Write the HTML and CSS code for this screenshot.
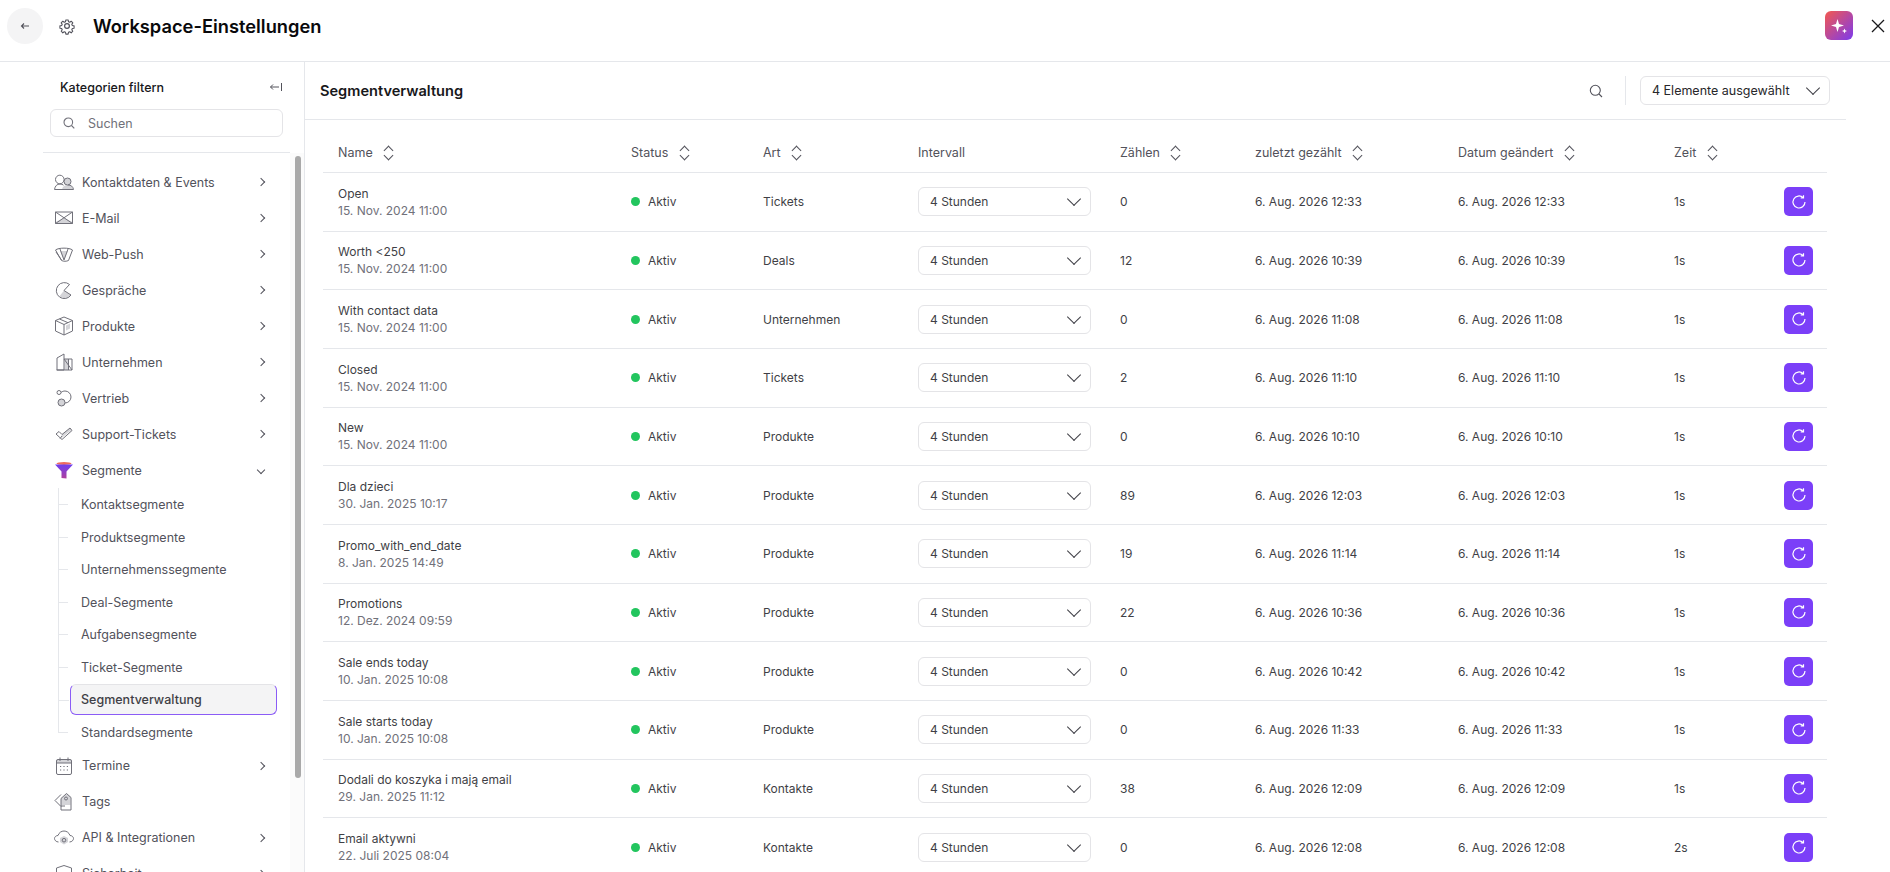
FILE: index.html
```html
<!DOCTYPE html>
<html lang="de">
<head>
  <meta charset="UTF-8">
  <title>Workspace-Einstellungen</title>
  <link rel="stylesheet" href="styles.css">
</head>
<body>
  <div class="app">
    <header class="topbar">
      <button class="back-btn">
        <svg width="10" height="10" viewBox="0 0 10 10"><path d="M9 5H1.500M4 2.500 1.500 5 4 7.500" fill="none" stroke="#52525b" stroke-width="1.100"/></svg>
      </button>
      <span class="gear">
        <svg width="18" height="18" viewBox="0 0 24 24" fill="none" stroke="#52525b" stroke-width="1.600" stroke-linejoin="round"><path d="M10.300 3h3.400l.5 2.600 1.800.8 2.200-1.500 2.400 2.400-1.500 2.200.8 1.800 2.600.5v3.400l-2.600.5-.8 1.800 1.500 2.200-2.400 2.400-2.200-1.500-1.800.8-.5 2.600h-3.400l-.5-2.600-1.800-.8-2.200 1.500-2.400-2.400 1.500-2.200-.8-1.800-2.600-.5v-3.400l2.600-.5.8-1.800-1.500-2.200 2.400-2.400 2.200 1.500 1.800-.8z" transform="translate(1.200 1.200) scale(.9)"/><circle cx="12" cy="12" r="3.200"/></svg>
      </span>
      <h1>Workspace-Einstellungen</h1>
      <div class="topbar-right">
        <span class="ai-btn">
          <svg width="22" height="22" viewBox="0 0 22 22" fill="#fff"><path d="M9.500 4 11 9l5 1.500L11 12l-1.500 5L8 12l-5-1.500L8 9z"/><path d="M16.500 13.500l.7 1.800 1.800.7-1.800.7-.7 1.800-.7-1.800-1.800-.7 1.800-.7z"/></svg>
        </span>
        <svg class="close" width="14" height="14" viewBox="0 0 14 14"><path d="M1 1l12 12M13 1 1 13" stroke="#18181b" stroke-width="1.300"/></svg>
      </div>
    </header>

    <div class="main">
      <aside class="sidebar">
        <div class="filter-head">
          <span>Kategorien filtern</span>
          <svg width="14" height="12" viewBox="0 0 14 12"><path d="M10 6H1.500M4 3.500 1.500 6 4 8.500M12.500 2v8" fill="none" stroke="#52525b" stroke-width="1"/></svg>
        </div>
        <div class="side-search">
          <svg width="14" height="14" viewBox="0 0 14 14" fill="none" stroke="#71717a" stroke-width="1.100"><circle cx="6.300" cy="6.300" r="4.300"/><path d="m9.500 9.500 2.800 2.800"/></svg>
          <span>Suchen</span>
        </div>
        <div class="nav-wrap">
          <nav class="nav">
            <a class="nav-item">
              <svg class="ico" viewBox="0 0 20 20"><circle cx="5.800" cy="7.500" r="4.300"/><path class="f" d="M8 17.500c.5-3 2.500-4.500 5.500-4.500s5 1.500 5.500 4.500z"/><circle class="f" cx="13.500" cy="9.500" r="3.500"/><circle cx="13.500" cy="9.500" r="3.500"/><path d="M.5 17.500C1 14 3 12 6 12c1.500 0 2.700.4 3.500 1.200M.5 17.500H19.500C19 14.500 17 13 14 13"/></svg>
              <span>Kontaktdaten &amp; Events</span><i class="chev"></i>
            </a>
            <a class="nav-item">
              <svg class="ico" viewBox="0 0 20 20"><path class="f" d="M1.500 15.500V14L10 10l8.500 4v1.500z"/><path d="M1.500 4h17v11.500h-17zM1.500 4 18.500 15.500M18.500 4 1.500 15.500"/></svg>
              <span>E-Mail</span><i class="chev"></i>
            </a>
            <a class="nav-item">
              <svg class="ico" viewBox="0 0 20 20"><path class="f" d="M6 7h8l-4 9z"/><path d="M1.500 6c3-2.500 14-2.500 17 0l-4 10.500c-2 1-5 1-7 0zM6 5l4 11 4-11M2 8l5.500 8"/></svg>
              <span>Web-Push</span><i class="chev"></i>
            </a>
            <a class="nav-item">
              <svg class="ico" viewBox="0 0 20 20"><path class="f" d="M10 10.500 17 15c-1.500 2-4 3-6.500 3-2 0-3.500-.6-5-1.800z"/><path d="M15.500 4.500A8 8 0 1 0 17 15l-7-4.500z"/></svg>
              <span>Gespräche</span><i class="chev"></i>
            </a>
            <a class="nav-item">
              <svg class="ico" viewBox="0 0 20 20"><path class="f" d="M12 9.500l4-2v5l-4 2z"/><path d="M10 1 18.500 4.500v10.500L10 19 1.500 15V4.500zM1.500 4.500 10 8.500l8.500-4M10 8.500V19M5.500 3l8.500 3.700"/></svg>
              <span>Produkte</span><i class="chev"></i>
            </a>
            <a class="nav-item">
              <svg class="ico" viewBox="0 0 20 20"><path class="f" d="M10.500 7h4v11h-4z"/><path d="M3 18V6l7-4v16zM10 7h8v11zM2.500 18h15.500M14.500 7v11"/></svg>
              <span>Unternehmen</span><i class="chev"></i>
            </a>
            <a class="nav-item">
              <svg class="ico" viewBox="0 0 20 20"><circle class="f" cx="7.500" cy="14.500" r="3.500"/><circle cx="7.500" cy="14.500" r="3.500"/><circle cx="5" cy="4.500" r="2"/><path d="M7 4.500c1-1 2.500-1.500 4-1.500a6 6 0 0 1 0 12H11"/></svg>
              <span>Vertrieb</span><i class="chev"></i>
            </a>
            <a class="nav-item">
              <svg class="ico" viewBox="0 0 20 20"><path class="f" d="m7.500 14 10-8-1.500-2-8.500 7z"/><path d="m2 10 3-2.500 3 3 8-6.500 2 2.500-10 9zM6 14.500 8 12"/></svg>
              <span>Support-Tickets</span><i class="chev"></i>
            </a>
            <a class="nav-item">
              <svg class="ico" viewBox="0 0 20 20"><defs><linearGradient id="fun" x1="0" y1="0" x2="0" y2="1"><stop offset="0" stop-color="#6d3df0"/><stop offset="1" stop-color="#b0409c"/></linearGradient></defs><ellipse cx="10" cy="3.500" rx="7.500" ry="1.500" fill="#ef6a5e" stroke="none"/><path d="M1 4.500h18L12.500 11.500V18.500l-5-.5v-6.500z" fill="url(#fun)" stroke="none"/></svg>
              <span>Segmente</span><i class="chev chev-down"></i>
            </a>
            <ul class="sub">
              <li>Kontaktsegmente</li>
              <li>Produktsegmente</li>
              <li>Unternehmenssegmente</li>
              <li>Deal-Segmente</li>
              <li>Aufgabensegmente</li>
              <li>Ticket-Segmente</li>
              <li class="active">Segmentverwaltung</li>
              <li>Standardsegmente</li>
            </ul>
            <a class="nav-item">
              <svg class="ico" viewBox="0 0 20 20"><path class="f" d="M2.500 3.500h15V7h-15z"/><rect x="2.500" y="3.500" width="15" height="15" rx="1.500"/><path d="M6 1.500v3.500M14 1.500v3.500M2.500 7h15M6 10.500h1.200M9.400 10.500h1.200M12.800 10.500H14M6 14h1.200M9.400 14h1.200M12.800 14H14"/></svg>
              <span>Termine</span><i class="chev"></i>
            </a>
            <a class="nav-item">
              <svg class="ico" viewBox="0 0 20 20"><path class="f" d="M7 6.500 12.500 1.500l4 3.500V13H7z"/><path d="M7 2.500 1 8.500l6 6M7 6.500 12.500 1.500l4.500 4V18H7zM7 14h4"/><circle cx="12" cy="6.500" r="1.500"/></svg>
              <span>Tags</span>
            </a>
            <a class="nav-item">
              <svg class="ico" viewBox="0 0 20 20"><path d="M4.500 14C2 14 .5 12 .5 10.500S2 7.500 4 7.500C5 4.500 7.500 3 10 3s5 1.500 6 4.500c2 0 3.500 1.500 3.500 3s-1.500 3.500-4 3.500"/><path class="f" d="M10 8 14 10v4l-4 2.500L6 14v-4z"/><circle cx="10" cy="12.200" r="1.800"/></svg>
              <span>API &amp; Integrationen</span><i class="chev"></i>
            </a>
            <a class="nav-item">
              <svg class="ico" viewBox="0 0 20 20"><path d="M10 1.500 17.500 4v7c0 4-3.500 6.500-7.500 7.500-4-1-7.500-3.500-7.500-7.500V4z"/></svg>
              <span>Sicherheit</span><i class="chev"></i>
            </a>
          </nav>
          <div class="scroll-track"><div class="scroll-thumb"></div></div>
        </div>
      </aside>

      <section class="content">
        <div class="toolbar">
          <h2>Segmentverwaltung</h2>
          <svg class="tool-search" width="16" height="16" viewBox="0 0 16 16" fill="none" stroke="#52525b" stroke-width="1.100"><circle cx="7.300" cy="7.300" r="5"/><path d="m11 11 3 3"/></svg>
          <div class="tool-sep"></div>
          <div class="select wide">4 Elemente ausgewählt<i class="sel-chev"></i></div>
        </div>

        <table class="grid">
          <colgroup>
            <col class="c-name"><col class="c-status"><col class="c-art"><col class="c-int"><col class="c-count"><col class="c-last"><col class="c-date"><col class="c-time"><col class="c-act">
          </colgroup>
          <thead>
            <tr>
              <th>Name<i class="sort"></i></th>
              <th>Status<i class="sort"></i></th>
              <th>Art<i class="sort"></i></th>
              <th>Intervall</th>
              <th>Zählen<i class="sort"></i></th>
              <th>zuletzt gezählt<i class="sort"></i></th>
              <th>Datum geändert<i class="sort"></i></th>
              <th>Zeit<i class="sort"></i></th>
              <th></th>
            </tr>
          </thead>
          <tbody>
            <tr>
              <td><div class="nm">Open</div><div class="dt">15. Nov. 2024 11:00</div></td>
              <td><span class="dot"></span>Aktiv</td><td>Tickets</td>
              <td><div class="select">4 Stunden<i class="sel-chev"></i></div></td>
              <td>0</td><td>6. Aug. 2026 12:33</td><td>6. Aug. 2026 12:33</td><td>1s</td>
              <td><button class="run"><svg viewBox="0 0 16 16"><path d="M14 8a6 6 0 1 1-1.800-4.300M12.500 1.200v2.800H9.700"/></svg></button></td>
            </tr>
            <tr>
              <td><div class="nm">Worth &lt;250</div><div class="dt">15. Nov. 2024 11:00</div></td>
              <td><span class="dot"></span>Aktiv</td><td>Deals</td>
              <td><div class="select">4 Stunden<i class="sel-chev"></i></div></td>
              <td>12</td><td>6. Aug. 2026 10:39</td><td>6. Aug. 2026 10:39</td><td>1s</td>
              <td><button class="run"><svg viewBox="0 0 16 16"><path d="M14 8a6 6 0 1 1-1.800-4.300M12.500 1.200v2.800H9.700"/></svg></button></td>
            </tr>
            <tr>
              <td><div class="nm">With contact data</div><div class="dt">15. Nov. 2024 11:00</div></td>
              <td><span class="dot"></span>Aktiv</td><td>Unternehmen</td>
              <td><div class="select">4 Stunden<i class="sel-chev"></i></div></td>
              <td>0</td><td>6. Aug. 2026 11:08</td><td>6. Aug. 2026 11:08</td><td>1s</td>
              <td><button class="run"><svg viewBox="0 0 16 16"><path d="M14 8a6 6 0 1 1-1.800-4.300M12.500 1.200v2.800H9.700"/></svg></button></td>
            </tr>
            <tr>
              <td><div class="nm">Closed</div><div class="dt">15. Nov. 2024 11:00</div></td>
              <td><span class="dot"></span>Aktiv</td><td>Tickets</td>
              <td><div class="select">4 Stunden<i class="sel-chev"></i></div></td>
              <td>2</td><td>6. Aug. 2026 11:10</td><td>6. Aug. 2026 11:10</td><td>1s</td>
              <td><button class="run"><svg viewBox="0 0 16 16"><path d="M14 8a6 6 0 1 1-1.800-4.300M12.500 1.200v2.800H9.700"/></svg></button></td>
            </tr>
            <tr>
              <td><div class="nm">New</div><div class="dt">15. Nov. 2024 11:00</div></td>
              <td><span class="dot"></span>Aktiv</td><td>Produkte</td>
              <td><div class="select">4 Stunden<i class="sel-chev"></i></div></td>
              <td>0</td><td>6. Aug. 2026 10:10</td><td>6. Aug. 2026 10:10</td><td>1s</td>
              <td><button class="run"><svg viewBox="0 0 16 16"><path d="M14 8a6 6 0 1 1-1.800-4.300M12.500 1.200v2.800H9.700"/></svg></button></td>
            </tr>
            <tr>
              <td><div class="nm">Dla dzieci</div><div class="dt">30. Jan. 2025 10:17</div></td>
              <td><span class="dot"></span>Aktiv</td><td>Produkte</td>
              <td><div class="select">4 Stunden<i class="sel-chev"></i></div></td>
              <td>89</td><td>6. Aug. 2026 12:03</td><td>6. Aug. 2026 12:03</td><td>1s</td>
              <td><button class="run"><svg viewBox="0 0 16 16"><path d="M14 8a6 6 0 1 1-1.800-4.300M12.500 1.200v2.800H9.700"/></svg></button></td>
            </tr>
            <tr>
              <td><div class="nm">Promo_with_end_date</div><div class="dt">8. Jan. 2025 14:49</div></td>
              <td><span class="dot"></span>Aktiv</td><td>Produkte</td>
              <td><div class="select">4 Stunden<i class="sel-chev"></i></div></td>
              <td>19</td><td>6. Aug. 2026 11:14</td><td>6. Aug. 2026 11:14</td><td>1s</td>
              <td><button class="run"><svg viewBox="0 0 16 16"><path d="M14 8a6 6 0 1 1-1.800-4.300M12.500 1.200v2.800H9.700"/></svg></button></td>
            </tr>
            <tr>
              <td><div class="nm">Promotions</div><div class="dt">12. Dez. 2024 09:59</div></td>
              <td><span class="dot"></span>Aktiv</td><td>Produkte</td>
              <td><div class="select">4 Stunden<i class="sel-chev"></i></div></td>
              <td>22</td><td>6. Aug. 2026 10:36</td><td>6. Aug. 2026 10:36</td><td>1s</td>
              <td><button class="run"><svg viewBox="0 0 16 16"><path d="M14 8a6 6 0 1 1-1.800-4.300M12.500 1.200v2.800H9.700"/></svg></button></td>
            </tr>
            <tr>
              <td><div class="nm">Sale ends today</div><div class="dt">10. Jan. 2025 10:08</div></td>
              <td><span class="dot"></span>Aktiv</td><td>Produkte</td>
              <td><div class="select">4 Stunden<i class="sel-chev"></i></div></td>
              <td>0</td><td>6. Aug. 2026 10:42</td><td>6. Aug. 2026 10:42</td><td>1s</td>
              <td><button class="run"><svg viewBox="0 0 16 16"><path d="M14 8a6 6 0 1 1-1.800-4.300M12.500 1.200v2.800H9.700"/></svg></button></td>
            </tr>
            <tr>
              <td><div class="nm">Sale starts today</div><div class="dt">10. Jan. 2025 10:08</div></td>
              <td><span class="dot"></span>Aktiv</td><td>Produkte</td>
              <td><div class="select">4 Stunden<i class="sel-chev"></i></div></td>
              <td>0</td><td>6. Aug. 2026 11:33</td><td>6. Aug. 2026 11:33</td><td>1s</td>
              <td><button class="run"><svg viewBox="0 0 16 16"><path d="M14 8a6 6 0 1 1-1.800-4.300M12.500 1.200v2.800H9.700"/></svg></button></td>
            </tr>
            <tr>
              <td><div class="nm">Dodali do koszyka i mają email</div><div class="dt">29. Jan. 2025 11:12</div></td>
              <td><span class="dot"></span>Aktiv</td><td>Kontakte</td>
              <td><div class="select">4 Stunden<i class="sel-chev"></i></div></td>
              <td>38</td><td>6. Aug. 2026 12:09</td><td>6. Aug. 2026 12:09</td><td>1s</td>
              <td><button class="run"><svg viewBox="0 0 16 16"><path d="M14 8a6 6 0 1 1-1.800-4.300M12.500 1.200v2.800H9.700"/></svg></button></td>
            </tr>
            <tr>
              <td><div class="nm">Email aktywni</div><div class="dt">22. Juli 2025 08:04</div></td>
              <td><span class="dot"></span>Aktiv</td><td>Kontakte</td>
              <td><div class="select">4 Stunden<i class="sel-chev"></i></div></td>
              <td>0</td><td>6. Aug. 2026 12:08</td><td>6. Aug. 2026 12:08</td><td>2s</td>
              <td><button class="run"><svg viewBox="0 0 16 16"><path d="M14 8a6 6 0 1 1-1.800-4.300M12.500 1.200v2.800H9.700"/></svg></button></td>
            </tr>
          </tbody>
        </table>
      </section>
    </div>
  </div>
</body>
</html>
```

FILE: styles.css
```css
* {
  box-sizing: border-box;
}

body {
  margin: 0;
  font-family: Inter, "Noto Sans", sans-serif;
  font-size: 12.5px;
  color: #3f3f46;
  background: #fff;
}

.app {
  display: flex;
  flex-direction: column;
  height: 100vh;
  overflow: hidden;
}

/* top bar */
.topbar {
  display: flex;
  align-items: center;
  flex: 0 0 62px;
  padding: 0 0 10px 7px;
  border-bottom: 1px solid #e5e7eb;
}

.back-btn {
  display: flex;
  align-items: center;
  justify-content: center;
  width: 36px;
  height: 36px;
  border: none;
  border-radius: 50%;
  background: #f4f4f5;
}

.gear {
  display: flex;
  margin-left: 15px;
}

.topbar h1 {
  margin: 0 0 0 17px;
  font-size: 18.3px;
  font-weight: 600;
  color: #09090b;
}

.topbar-right {
  display: flex;
  align-items: center;
  margin-left: auto;
  padding-right: 5px;
}

.ai-btn {
  display: flex;
  align-items: center;
  justify-content: center;
  width: 28px;
  height: 29px;
  border-radius: 6px;
  background: linear-gradient(135deg, #f4584f, #7c3aed);
}

.close {
  margin-left: 18px;
}

.main {
  display: flex;
  flex: 1;
  min-height: 0;
}

/* sidebar */
.sidebar {
  flex: 0 0 305px;
  display: flex;
  flex-direction: column;
  border-right: 1px solid #e5e7eb;
}

.filter-head {
  display: flex;
  align-items: center;
  justify-content: space-between;
  height: 47px;
  padding: 3px 21px 0 60px;
  font-weight: 500;
  color: #18181b;
}

.side-search {
  display: flex;
  align-items: center;
  gap: 12px;
  width: 233px;
  height: 28px;
  margin-left: 50px;
  padding-left: 11px;
  border: 1px solid #e4e4e7;
  border-radius: 6px;
  color: #71717a;
}

.nav-wrap {
  position: relative;
  flex: 1;
  min-height: 0;
  width: 247px;
  margin: 15px 0 0 43px;
  border-top: 1px solid #e5e7eb;
}

.nav {
  height: 720px;
  overflow: hidden;
  padding-top: 11px;
}

.nav-item {
  display: flex;
  align-items: center;
  gap: 8px;
  height: 36px;
  padding: 0 26px 0 11px;
  color: #52525b;
}

.ico {
  flex: 0 0 20px;
  width: 20px;
  height: 20px;
  fill: none;
  stroke: #71717a;
  stroke-width: 1;
  stroke-linejoin: round;
}

.ico .f {
  fill: #d4d4d8;
  stroke: none;
}

.chev {
  width: 6px;
  height: 6px;
  margin-left: auto;
  border-top: 1px solid #52525b;
  border-right: 1px solid #52525b;
  transform: rotate(45deg);
}

.chev-down {
  transform: rotate(135deg);
}

.sub {
  position: relative;
  list-style: none;
  margin: 1px 0 0 15px;
  padding: 0;
}

.sub::before {
  content: "";
  position: absolute;
  left: 0;
  top: -1px;
  bottom: 15px;
  border-left: 1px solid #e5e7eb;
}

.sub li {
  position: relative;
  height: 31px;
  margin: 0 13px 1.500px 12px;
  padding-left: 11px;
  line-height: 31px;
  color: #52525b;
  border-radius: 6px;
}

.sub li:last-child {
  margin-bottom: 0;
}

.sub li::before {
  content: "";
  position: absolute;
  left: -12px;
  top: 15px;
  width: 10px;
  border-top: 1px solid #e5e7eb;
}

.sub li.active {
  background: #f4f4f5;
  border: 1px solid #8b5cf6;
  border-top-color: #e4e4e7;
  padding-left: 10px;
  line-height: 29px;
  font-weight: 500;
  color: #3f3f46;
}

.scroll-track {
  position: absolute;
  right: -14px;
  top: 0;
  bottom: 0;
  width: 14px;
  background: #fbfbfb;
}

.scroll-thumb {
  width: 6px;
  height: 622px;
  margin: 3px 0 0 5px;
  border-radius: 3px;
  background: #a9a9a9;
}

/* content */
.content {
  flex: 1;
  min-width: 0;
  padding-right: 44px;
}

.toolbar {
  display: flex;
  align-items: center;
  height: 58px;
  padding: 0 16px 0 15px;
  border-bottom: 1px solid #e5e7eb;
}

.toolbar h2 {
  margin: 0 auto 0 0;
  font-size: 14.600px;
  font-weight: 600;
  color: #18181b;
}

.tool-search {
  margin-right: 21px;
}

.tool-sep {
  width: 1px;
  height: 29px;
  margin-right: 14px;
  background: #e5e7eb;
}

.select {
  position: relative;
  display: flex;
  align-items: center;
  justify-content: space-between;
  width: 173px;
  height: 29px;
  padding: 0 11px;
  border: 1px solid #e4e4e7;
  border-radius: 6px;
  color: #3f3f46;
  background: #fff;
}

.select.wide {
  width: 190px;
  color: #27272a;
}

.sel-chev {
  width: 10px;
  height: 10px;
  margin: -5px 0 0 0;
  border-right: 1.300px solid #3f3f46;
  border-bottom: 1.300px solid #3f3f46;
  transform: rotate(45deg);
}

/* table */
.grid {
  width: 1504px;
  margin: 13px 0 0 18px;
  border-collapse: separate;
  border-spacing: 0;
  table-layout: fixed;
}

.c-name { width: 293px; }
.c-status { width: 132px; }
.c-art { width: 155px; }
.c-int { width: 202px; }
.c-count { width: 135px; }
.c-last { width: 203px; }
.c-date { width: 216px; }
.c-time { width: 111px; }
.c-act { width: 57px; }

.grid th {
  height: 40px;
  padding: 0 15px;
  font-weight: 400;
  text-align: left;
  color: #52525b;
  border-bottom: 1px solid #e5e7eb;
}

.grid td {
  height: 58.670px;
  padding: 0 15px;
  font-size: 12px;
  color: #3f3f46;
  border-bottom: 1px solid #e5e7eb;
}

.sort {
  display: inline-block;
  position: relative;
  width: 10px;
  height: 14px;
  margin-left: 11px;
  vertical-align: -3px;
}

.sort::before,
.sort::after {
  content: "";
  position: absolute;
  left: 1.500px;
  width: 6px;
  height: 6px;
  border-left: 1.200px solid #52525b;
  border-top: 1.200px solid #52525b;
  transform: rotate(45deg);
}

.sort::before {
  top: 1px;
}

.sort::after {
  bottom: 1px;
  transform: rotate(225deg);
}

.nm {
  line-height: 17px;
}

.dt {
  line-height: 17px;
  color: #71717a;
}

.dot {
  display: inline-block;
  width: 9px;
  height: 9px;
  margin-right: 8px;
  border-radius: 50%;
  background: #22c55e;
}

.run {
  display: flex;
  align-items: center;
  justify-content: center;
  width: 29px;
  height: 29px;
  margin-left: -1px;
  padding: 0;
  border: none;
  border-radius: 5px;
  background: #7b3ff8;
}

.run svg {
  width: 16px;
  height: 16px;
  fill: none;
  stroke: #fff;
  stroke-width: 1.200;
}
```
